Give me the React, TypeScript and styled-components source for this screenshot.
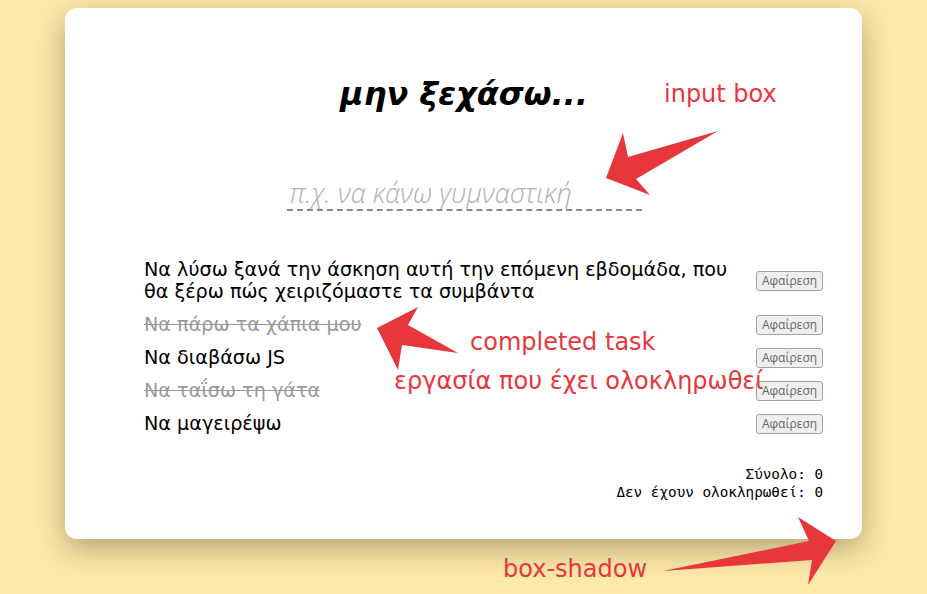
import React from "react";
import styled, { createGlobalStyle } from "styled-components";

const GlobalStyle = createGlobalStyle`
  html, body {
    margin: 0;
    padding: 0;
    background: #fde9a8;
  }
  body {
    font-family: "DejaVu Sans", sans-serif;
  }
`;

const Page = styled.div`
  position: relative;
  min-height: 594px;
  padding-top: 8px;
  box-sizing: border-box;
  overflow: hidden;
`;

const Card = styled.main`
  position: relative;
  width: 797px;
  margin: 0 auto;
  box-sizing: border-box;
  padding: 40px 39px 38px 40px;
  background: #fff;
  border-radius: 12px;
  box-shadow: 0 10px 30px rgba(0, 0, 0, 0.3);
`;

const Title = styled.h1`
  margin: 28px 0 0;
  font-family: "DejaVu Sans", sans-serif;
  font-size: 32px;
  line-height: 37px;
  font-weight: bold;
  font-style: italic;
  text-align: center;
  color: #000;
`;

const TaskInput = styled.input`
  display: block;
  width: 355px;
  height: 34px;
  margin: 64px auto 0;
  padding: 0 0 2px 3px;
  box-sizing: border-box;
  border: none;
  border-bottom: 2px dashed #888;
  outline: none;
  background: transparent;
  font-family: "Open Sans", sans-serif;
  font-weight: 300;
  font-size: 27px;
  font-style: italic;
  line-height: 30px;
  color: #333;
  &::placeholder {
    color: #b0b0b0;
  }
`;

const List = styled.ul`
  list-style: none;
  margin: 42px 0 0;
  padding: 0 0 0 39px;
`;

const Item = styled.li`
  display: flex;
  align-items: center;
  justify-content: space-between;
  gap: 24px;
  padding: 5.5px 0;
`;

const ItemText = styled.span<{ $done?: boolean }>`
  font-size: 19.2px;
  line-height: 22px;
  color: ${(p) => (p.$done ? "#999" : "#000")};
  text-decoration: ${(p) => (p.$done ? "line-through" : "none")};
  max-width: 600px;
`;

const RemoveButton = styled.button`
  flex: none;
  width: 67px;
  height: 20px;
  padding: 0;
  font-family: "Open Sans", sans-serif;
  font-size: 12px;
  color: #666;
  background: #efefef;
  border: 1px solid #a3a3a3;
  border-radius: 3px;
`;

const Footer = styled.footer`
  margin-top: 25px;
  text-align: right;
  font-family: "DejaVu Sans Mono", monospace;
  font-size: 14.3px;
  line-height: 18px;
  color: #000;
`;

const Overlay = styled.div`
  position: absolute;
  inset: 0;
  pointer-events: none;
`;

const Arrows = styled.svg`
  position: absolute;
  left: 0;
  top: 0;
`;

const Note = styled.div<{ $x: number; $y: number }>`
  position: absolute;
  left: ${(p) => p.$x}px;
  top: ${(p) => p.$y}px;
  font-family: "DejaVu Sans", sans-serif;
  font-size: 24px;
  line-height: 24px;
  color: #e8363d;
  white-space: nowrap;
`;

const tasks = [
  { text: "Να λύσω ξανά την άσκηση αυτή την επόμενη εβδομάδα, που θα ξέρω πώς χειριζόμαστε τα συμβάντα", done: false },
  { text: "Να πάρω τα χάπια μου", done: true },
  { text: "Να διαβάσω JS", done: false },
  { text: "Να ταΐσω τη γάτα", done: true },
  { text: "Να μαγειρέψω", done: false },
];

export default function App() {
  return (
    <Page>
      <GlobalStyle />
      <Card>
        <Title>μην ξεχάσω...</Title>
        <TaskInput placeholder="π.χ. να κάνω γυμναστική" />
        <List>
          {tasks.map((t, i) => (
            <Item key={i}>
              <ItemText $done={t.done}>{t.text}</ItemText>
              <RemoveButton>Αφαίρεση</RemoveButton>
            </Item>
          ))}
        </List>
        <Footer>
          <div>Σύνολο: 0</div>
          <div>Δεν έχουν ολοκληρωθεί: 0</div>
        </Footer>
      </Card>
      <Overlay>
        <Arrows width="927" height="594" viewBox="0 0 927 594">
          <polygon fill="#e8363d" points="718,131 628,157 623,133 606,178 650,195 636,179" />
          <polygon fill="#e8363d" points="377,328 418,307 408,325 458,353 402,345 398,370" />
          <polygon fill="#e8363d" points="663,571 809,541 798,517 836,541 808,585 812,560" />
        </Arrows>
        <Note $x={664} $y={82}>input box</Note>
        <Note $x={470} $y={330}>completed task</Note>
        <Note $x={394} $y={369}>εργασία που έχει ολοκληρωθεί</Note>
        <Note $x={503} $y={557}>box-shadow</Note>
      </Overlay>
    </Page>
  );
}
